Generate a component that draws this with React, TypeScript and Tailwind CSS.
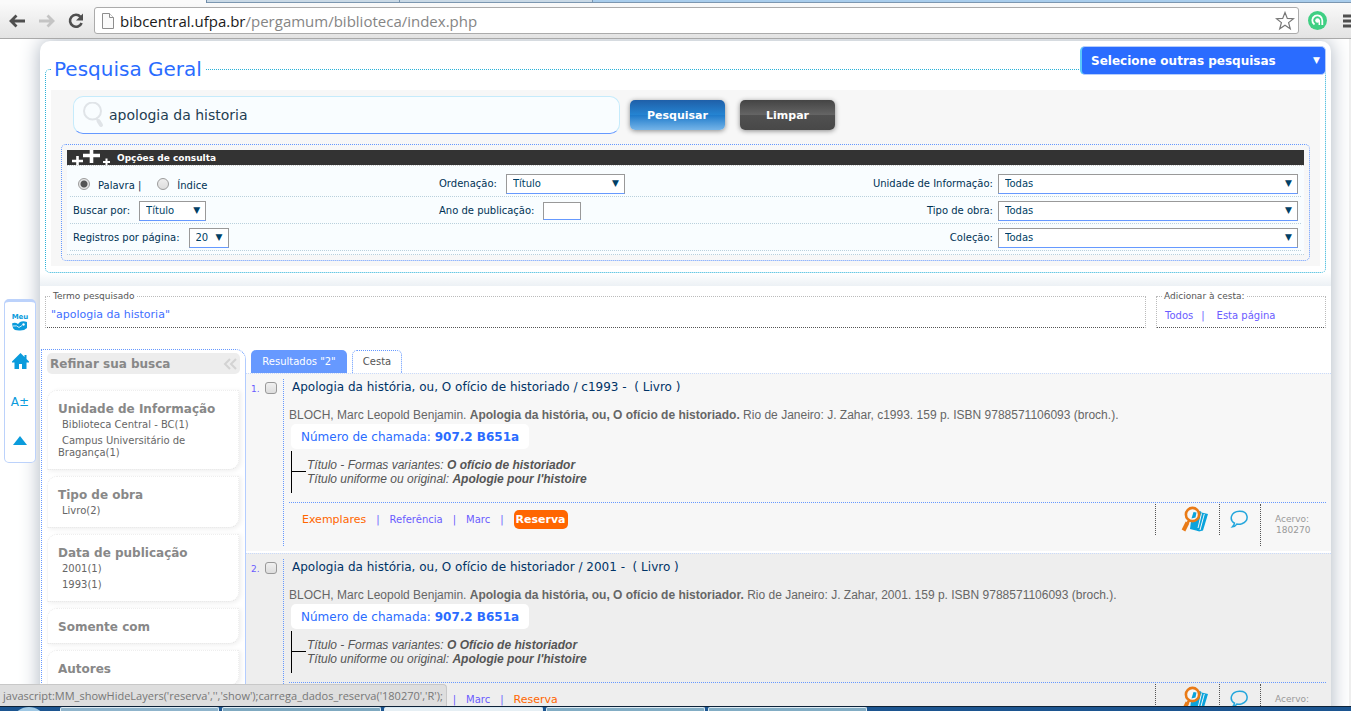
import type { ReactNode } from "react";
import clsx from "clsx";

const sans = "font-['DejaVu_Sans',Verdana,sans-serif]";
const arial = "font-['Liberation_Sans',Arial,sans-serif]";
const chrome = "font-['Open_Sans','Noto_Sans',sans-serif]";

const refinements = [
  { title: "Unidade de Informação", items: ["Biblioteca Central - BC(1)", "Campus Universitário de Bragança(1)"] },
  { title: "Tipo de obra", items: ["Livro(2)"] },
  { title: "Data de publicação", items: ["2001(1)", "1993(1)"] },
  { title: "Somente com", items: [] },
  { title: "Autores", items: [] },
];

const results = [
  {
    id: 1,
    title: "Apologia da história, ou, O ofício de historiado / c1993 -\u00a0 ( Livro )",
    work: "Apologia da história, ou, O ofício de historiado.",
    imprint: "Rio de Janeiro: J. Zahar, c1993. 159 p. ISBN 9788571106093 (broch.).",
    variant: "O ofício de historiador",
    reserved: true,
  },
  {
    id: 2,
    title: "Apologia da história, ou, O ofício de historiador / 2001 -\u00a0 ( Livro )",
    work: "Apologia da história, ou, O ofício de historiador.",
    imprint: "Rio de Janeiro: J. Zahar, 2001. 159 p. ISBN 9788571106093 (broch.).",
    variant: "O Ofício de historiador",
    reserved: false,
  },
];

function BrowserBar() {
  return (
    <header className={clsx("shrink-0", chrome)}>
      <div className="flex h-[3px] bg-[#a9cdec]">
        <div className="w-[207px] border-r border-[#6f8ba8] bg-[#fafafa]" />
        <div className="w-[193px] border-r border-b border-[#7b96b0] bg-[#c9d9e6]" />
        <div className="w-[193px] border-r border-b border-[#7b96b0] bg-[#c9d9e6]" />
        <div className="flex-1 border-b border-[#7b96b0]" />
      </div>
      <div className="flex h-9 items-center overflow-hidden border-b border-[#a9a9a9] bg-linear-to-b from-[#fafafa] to-[#e3e3e3] pl-2">
        <button aria-label="Voltar" className="w-[30px]">
          <svg width="18" height="16" viewBox="0 0 18 16" fill="none" stroke="#4f4f4f" strokeWidth="2.8">
            <path d="M17 8H3.500M8.500 2.500L3 8l5.500 5.500" />
          </svg>
        </button>
        <button aria-label="Avançar" className="w-[29px]">
          <svg width="18" height="16" viewBox="0 0 18 16" fill="none" stroke="#c4c4c4" strokeWidth="2.8">
            <path d="M1 8h13.500M9.500 2.500L15 8l-5.500 5.500" />
          </svg>
        </button>
        <button aria-label="Recarregar" className="w-[27px]">
          <svg width="18" height="16" viewBox="0 0 18 16">
            <path d="M13.500 3.800A6 6 0 1 0 14.600 10" fill="none" stroke="#4f4f4f" strokeWidth="2.600" />
            <path d="M16 .5v7H9z" fill="#4f4f4f" />
          </svg>
        </button>
        <div className="flex h-[27px] flex-1 items-center rounded-[3px] border border-[#ababab] bg-white px-[7px]">
          <svg width="12" height="16" viewBox="0 0 12 16" fill="#fafafa" stroke="#8d8d8d">
            <path d="M.5 .5h7l4 4v11H.5z" />
            <path d="M7.500 .5v4h4" />
          </svg>
          <p className="flex-1 pl-[6px] text-[15px] leading-5 text-[#858585]">
            <span className="text-[#1a1a1a]">bibcentral.ufpa.br</span>/pergamum/biblioteca/index.php
          </p>
          <button aria-label="Favoritos" className="-mr-1">
            <svg width="20" height="20" viewBox="0 0 20 20" fill="#fff" stroke="#777" strokeWidth="1.200">
              <path d="M10 1.500l2.300 5.900 6.200.3-4.900 3.900 1.700 6.200-5.300-3.500-5.300 3.500 1.700-6.200L1.500 7.700l6.200-.3z" />
            </svg>
          </button>
        </div>
        <button aria-label="Extensão" className="ml-[9px]">
          <svg width="19" height="19" viewBox="0 0 19 19">
            <circle cx="9.500" cy="9.500" r="9.500" fill="#3fcf83" />
            <path d="M6.500 13.500A5 5 0 1 1 14.300 9.500v4.500" fill="none" stroke="#fff" strokeWidth="1.800" />
            <path d="M11.300 9v5" stroke="#fff" strokeWidth="1.500" />
            <circle cx="9.500" cy="9.500" r="2.300" fill="#fff" />
          </svg>
        </button>
        <button aria-label="Menu" className="-mr-2 ml-4">
          <svg width="16" height="14" viewBox="0 0 16 14" stroke="#4f4f4f" strokeWidth="3">
            <path d="M0 2h16M0 7h16M0 12h16" />
          </svg>
        </button>
      </div>
    </header>
  );
}

function Select({ id, value, className }: { id: string; value: string; className: string }) {
  return (
    <span className={clsx("relative inline-block h-5", className)}>
      <select
        id={id}
        className="block h-5 w-full appearance-none border border-[#999] border-b-[#6699ff] bg-white pl-[6px] text-[10px] leading-4 text-[#003f66]"
      >
        <option>{value}</option>
      </select>
      <span className="pointer-events-none absolute top-[3px] right-[6px] text-[9px] leading-3 text-[#003f66]">▼</span>
    </span>
  );
}

function Radio({ id, label, checked }: { id: string; label: string; checked?: boolean }) {
  return (
    <>
      <input
        type="radio"
        name="modo"
        id={id}
        defaultChecked={checked}
        className="size-3 appearance-none rounded-full border border-[#9b9b9b] bg-linear-to-b from-[#eee] to-[#ddd] checked:bg-[radial-gradient(circle,#555_0_3px,#e6e6e6_4px)]"
      />
      <label htmlFor={id} className="pt-[5px]">
        {label}
      </label>
    </>
  );
}

function OptionRow({ children }: { children: ReactNode }) {
  return (
    <div className="grid h-[27px] grid-cols-[366px_1fr_auto] items-center border-b border-dotted border-[#b9d0dc] px-[3px] pt-px">
      {children}
    </div>
  );
}

function SearchOptions() {
  return (
    <section className="rounded-[5px] border border-dotted border-[#6699ff] p-[5px]">
      <h2 className="flex h-[15px] items-center bg-[#333] pl-1 text-[9px] leading-3 font-bold text-white">
        <svg width="40" height="15" viewBox="0 0 40 15" stroke="#fff" fill="none">
          <path d="M1 11h11M6.500 6v9" strokeWidth="2.600" />
          <path d="M12 5.500h17M20.500 0v13" strokeWidth="3.600" />
          <path d="M32 12h7M35.500 8.500v7" strokeWidth="2" />
        </svg>
        <span className="pl-[6px]">Opções de consulta</span>
      </h2>
      <div className="border-t border-b border-dotted border-t-[#ccc] border-b-[#b9d0dc] bg-[#f9fdff] px-[3px] pt-1 pb-[3px] text-[10px] leading-3 text-[#003355]">
        <OptionRow>
          <div className="flex items-center gap-2 pl-[5px]">
            <Radio id="palavra" label="Palavra |" checked />
            <span className="w-0" />
            <Radio id="indice" label="Índice" />
          </div>
          <div className="flex items-center gap-[9px]">
            <label htmlFor="ordenacao">Ordenação:</label>
            <Select id="ordenacao" value="Título" className="w-[119px]" />
          </div>
          <div className="flex items-center gap-[5px]">
            <label htmlFor="unidade">Unidade de Informação:</label>
            <Select id="unidade" value="Todas" className="w-[300px]" />
          </div>
        </OptionRow>
        <OptionRow>
          <div className="flex items-center gap-[9px]">
            <label htmlFor="buscar">Buscar por:</label>
            <Select id="buscar" value="Título" className="w-[67px]" />
          </div>
          <div className="flex items-center gap-[9px]">
            <label htmlFor="ano">Ano de publicação:</label>
            <input id="ano" className="h-[18px] w-[38px] border border-[#999] border-b-[#6699ff] bg-white" />
          </div>
          <div className="flex items-center justify-end gap-[5px]">
            <label htmlFor="tipo">Tipo de obra:</label>
            <Select id="tipo" value="Todas" className="w-[300px]" />
          </div>
        </OptionRow>
        <OptionRow>
          <div className="flex items-center gap-[9px]">
            <label htmlFor="registros">Registros por página:</label>
            <Select id="registros" value="20" className="w-10" />
          </div>
          <div />
          <div className="flex items-center justify-end gap-[5px]">
            <label htmlFor="colecao">Coleção:</label>
            <Select id="colecao" value="Todas" className="w-[300px]" />
          </div>
        </OptionRow>
      </div>
    </section>
  );
}

function SearchForm() {
  return (
    <div className="relative px-[5px] pt-[17px]">
      <fieldset className="rounded-[5px] border border-dotted border-[#28b1d8] px-[5px] pt-[10px] pb-[6px]">
        <legend className="px-[3px] text-[20px] leading-[22px] text-[#2a6cff]">Pesquisa Geral</legend>
        <form className="bg-[#f7f7f7] px-[10px] pt-[6px] pb-[5px]" onSubmit={(e) => e.preventDefault()}>
          <div className="mb-[10px] flex items-center pl-3">
            <label className="flex h-[38px] w-[547px] items-center rounded-[10px] border border-[#c6ebfb] border-b-[#6699ff] bg-[#f9fdff] pl-[9px]">
              <svg width="22" height="27" viewBox="0 0 22 27" fill="none" stroke="#e0e4e8">
                <circle cx="9.500" cy="9" r="8.500" strokeWidth="2" />
                <path d="M13 16l2 2.500" strokeWidth="2" />
                <path d="M15.500 19l2.500 4" strokeWidth="4" strokeLinecap="round" />
              </svg>
              <input
                aria-label="Termo de busca"
                defaultValue="apologia da historia"
                className="ml-1 flex-1 bg-transparent text-[14px] leading-5 text-[#1f3d52] outline-none"
              />
            </label>
            <button
              type="submit"
              className="ml-[10px] h-[30px] w-[95px] rounded-[5px] bg-[linear-gradient(#1f5fa8,#2585d3_50%,#1f7bcb_51%,#75b4e8)] pt-[2px] text-[11px] font-bold text-white shadow-[0_1px_5px_#888]"
            >
              Pesquisar
            </button>
            <button
              type="reset"
              className="ml-[15px] h-[30px] w-[95px] rounded-[5px] bg-[linear-gradient(#444,#656565_50%,#505050_51%,#484848)] pt-[2px] text-[11px] font-bold text-white shadow-[0_1px_5px_#888]"
            >
              Limpar
            </button>
          </div>
          <SearchOptions />
        </form>
      </fieldset>
      <div className="absolute top-[5px] right-[5px] w-[246px]">
        <select
          aria-label="Outras pesquisas"
          className="block h-[29px] w-full appearance-none rounded-[5px] border border-l-2 border-[#b5cdfb] border-l-[#5ac8fa] bg-[#2a6cff] pl-[9px] text-[12px] font-bold text-white"
        >
          <option>Selecione outras pesquisas</option>
        </select>
        <span className="pointer-events-none absolute top-2 right-[6px] text-[9px] leading-3 text-white">▼</span>
      </div>
    </div>
  );
}

function TermBar() {
  const box = "h-[38px] border border-dotted border-[#bbb] border-b-[#555]";
  return (
    <div className="flex gap-[10px] px-[5px] pt-1">
      <fieldset className={clsx(box, "flex-1 px-[5px]")}>
        <legend className="px-[2px] text-[9px] leading-3 text-[#555]">Termo pesquisado</legend>
        <p className="pt-[5px] text-[11px] leading-4 text-[#3f6fff]">"apologia da historia"</p>
      </fieldset>
      <fieldset className={clsx(box, "w-[170px] px-[5px]")}>
        <legend className="px-[2px] text-[9px] leading-3 text-[#555]">Adicionar à cesta:</legend>
        <p className="flex gap-2 pt-[6px] pl-[3px] text-[10px] leading-4 text-[#6a5cff]">
          <a href="#todos">Todos</a>
          <span>|</span>
          <a href="#pagina" className="pl-1">
            Esta página
          </a>
        </p>
      </fieldset>
    </div>
  );
}

function Sidebar() {
  return (
    <aside className="ml-px w-[205px] shrink-0 rounded-tr-[10px] border border-b-0 border-dotted border-[#6699ff] px-[5px] pt-[3px]">
      <h2 className="mb-4 flex h-[21px] items-center justify-between rounded-[5px] bg-[#ededed] px-[3px] text-[12px] leading-4 font-bold text-[#888]">
        Refinar sua busca
        <svg width="14" height="12" viewBox="0 0 14 12" fill="none" stroke="#d3d3d3" strokeWidth="2">
          <path d="M7 1L2 6l5 5M13 1L8 6l5 5" />
        </svg>
      </h2>
      <div className="flex flex-col gap-[6px] pr-px">
        {refinements.map((group) => (
          <section
            key={group.title}
            className="rounded-tl-[10px] rounded-br-[10px] border border-dotted border-[#eee] border-b-[#ddd] bg-white px-[10px] pt-[10px] pb-2 shadow-[2px_1px_5px_#eee]"
          >
            <h3 className="text-[12px] leading-4 font-bold text-[#888]">{group.title}</h3>
            {group.items.length > 0 && (
              <ul className="flex flex-col gap-1 pt-[2px] pb-[2px] text-[10px] leading-3 text-[#666]">
                {group.items.map((item) => (
                  <li key={item} className="indent-1">
                    <a href="#refinar">{item}</a>
                  </li>
                ))}
              </ul>
            )}
          </section>
        ))}
      </div>
    </aside>
  );
}

function LookupIcon() {
  return (
    <svg width="28" height="27" viewBox="0 0 28 27">
      <path d="M10 15l4-8 5-2 1.500 1L17 25 9 23z" fill="#0aa3dc" />
      <path d="M16 24.500L20.500 6.500l6.500 1.500-5 16.500-4 1z" fill="#0aa3dc" />
      <path d="M20.500 7.500L17 22M23.300 8L19 24" stroke="#f7f7f7" strokeWidth="1" />
      <circle cx="11.500" cy="8.500" r="6.600" fill="#f7f7f7" stroke="#e97b17" strokeWidth="2.600" />
      <path d="M10.500 12.500l2-6.500 3 .5-1 5z" fill="#0aa3dc" />
      <path d="M8.500 14L6.500 17" stroke="#e97b17" strokeWidth="2.500" />
      <path d="M6.500 16.500l-4 8" stroke="#e97b17" strokeWidth="4" />
    </svg>
  );
}

function BubbleIcon() {
  return (
    <svg width="18" height="19" viewBox="0 0 18 19" fill="none" stroke="#23a6dc" strokeWidth="1.500">
      <path d="M4.500 13.200C-1 10 .5 1.500 9.500 1.200c9-.2 10.300 9.500 2.300 12.600-2 .7-3.800.6-5 .3-1 1.500-2.600 2.500-4.300 2.700 1-1 1.800-2 2-3.600z" />
    </svg>
  );
}

function Result({ item, alternate }: { item: (typeof results)[number]; alternate: boolean }) {
  return (
    <article
      className={clsx(
        "mb-[2px] flex h-[178px] border-t border-dotted border-[#c9dafa] pt-[5px] pr-[5px] pb-[5px]",
        alternate ? "bg-[#eee]" : "bg-[#f7f7f7]"
      )}
    >
      <div className="flex w-[38px] shrink-0 items-start border-r border-dotted border-[#6699ff] pt-[3px] pl-[5px]">
        <label htmlFor={`item-${item.id}`} className="w-[14px] pt-px text-[9px] leading-3 text-[#6a5cff]">
          {item.id}.
        </label>
        <input
          id={`item-${item.id}`}
          type="checkbox"
          className="size-3 shrink-0 appearance-none rounded-[3px] border border-[#999] bg-linear-to-b from-[#f0f0f0] to-[#ddd]"
        />
      </div>
      <div className="flex min-w-0 flex-1 flex-col pl-[5px]">
        <h3 className="pl-[3px] text-[12px] leading-4 text-[#003366]">
          <a href="#obra">{item.title}</a>
        </h3>
        <p className={clsx("pt-3 text-[12px] leading-4 text-[#666]", arial)}>
          BLOCH, Marc Leopold Benjamin. <b>{item.work}</b> {item.imprint}
        </p>
        <p className="mt-px ml-[2px] self-start rounded-[5px] bg-white px-[10px] pt-px text-[12px] leading-6 text-[#2a6cff]">
          Número de chamada: <b>907.2 B651a</b>
        </p>
        <div className="mt-[2px] ml-[2px] flex h-[42px] border-l border-black">
          <span className="h-[21px] w-[14px] border-b border-black" />
          <p className={clsx("pt-[7px] pl-px text-[12px] leading-[14px] text-[#555] italic", arial)}>
            Título - Formas variantes: <b>{item.variant}</b>
            <br />
            Título uniforme ou original: <b>Apologie pour l'histoire</b>
          </p>
        </div>
        <footer className="mt-[9px] flex items-start border-t border-dotted border-[#6699ff] pt-px">
          <nav className="flex flex-1 items-center gap-[10px] pt-[6px] pl-[13px] text-[10px] leading-[19px] text-[#6a5cff]">
            <a href="#exemplares" className="text-[11px] text-[#ff6600]">
              Exemplares
            </a>
            <span>|</span>
            <a href="#referencia">Referência</a>
            <span>|</span>
            <a href="#marc">Marc</a>
            <span>|</span>
            <a
              href="#reserva"
              className={clsx(
                "text-[11px]",
                item.reserved ? "rounded-[5px] bg-[#ff6600] px-[2px] font-bold text-white" : "text-[#ff6600]"
              )}
            >
              Reserva
            </a>
          </nav>
          <button aria-label="Localizar" className="h-[31px] w-16 border-l border-dotted border-[#555] pl-[25px]">
            <LookupIcon />
          </button>
          <button aria-label="Comentar" className="h-[31px] w-[41px] border-l border-dotted border-[#555] pl-[10px]">
            <BubbleIcon />
          </button>
          <p className="h-[42px] w-[66px] border-l border-dotted border-[#555] pt-[10px] pl-[14px] text-[9px] leading-[11px] text-[#999]">
            Acervo:
            <br />
            <span className="pl-px">180270</span>
          </p>
        </footer>
      </div>
    </article>
  );
}

function SideTools() {
  return (
    <nav className="absolute top-[260px] left-1 flex h-[164px] w-8 flex-col items-center rounded-[5px] border border-t-[3px] border-[#bcd2fb] bg-white pt-3">
      <a href="#meu" aria-label="Meu Pergamum" className="flex h-[39px] flex-col items-center text-[7px] leading-[7px] font-bold text-[#0a9bdc]">
        Meu
        <svg width="16" height="10" viewBox="0 0 16 10" fill="#0a9bdc">
          <path d="M0 2.500q3-1.500 6 .5l2-2q3-1.500 7 0v6q-3 3-8 2.500Q2 9.500 1 7z" />
          <path d="M1 5q4-1 6 1.500l3-2" fill="none" stroke="#fff" strokeWidth=".8" />
          <circle cx="11.500" cy="3.500" r="1.200" fill="#fff" />
        </svg>
      </a>
      <a href="#inicio" aria-label="Início" className="h-[39px]">
        <svg width="17" height="17" viewBox="0 0 17 17" fill="#0a9bdc">
          <path d="M8.500 0l4 4V2h2v4L17 8.500V9.500h-2.500V16H10v-5H7v5H2.500V9.500H0v-1z" />
        </svg>
      </a>
      <a href="#fonte" className="h-10 text-[12px] leading-5 text-[#0a9bdc]">
        A±
      </a>
      <a href="#topo" aria-label="Topo" className="pt-1">
        <svg width="14" height="10" viewBox="0 0 14 10" fill="#0a9bdc">
          <path d="M7 0l7 9H0z" />
        </svg>
      </a>
    </nav>
  );
}

function Taskbar() {
  const windows = ["#8fb4cb", "#7fa9c0", "#e6eff4", "#82adc4", "#82adc4"];
  return (
    <footer className="flex h-[5px] shrink-0 gap-[3px] border-t border-[#0d2238] bg-[#1c5590]">
      <div className="flex w-[57px] justify-center overflow-hidden">
        <div className="h-5 w-7 rounded-[50%] bg-[#9fc8e4]" />
      </div>
      {windows.map((color, i) => (
        <div key={i} className="w-[159px] rounded-t-[2px] border border-b-0 border-[#dbeaf3]" style={{ background: color }} />
      ))}
    </footer>
  );
}

export default function App() {
  return (
    <div className={clsx("flex h-screen flex-col overflow-hidden bg-white", sans)}>
      <BrowserBar />
      <div className="relative min-h-0 flex-1 overflow-hidden border-r-2 border-[#eee]">
        <main className="mt-[2px] mr-[18px] ml-10 rounded-t-[10px] bg-white shadow-[0_0_20px_#aab3bf]">
          <SearchForm />
          <div className="h-[13px] bg-linear-to-b from-white to-[#ecf1f5]" />
          <TermBar />
          <div className="flex pt-[21px]">
            <Sidebar />
            <section className="min-w-0 flex-1">
              <div className="flex h-6 items-end gap-[5px] pl-[5px] text-[10px] leading-[22px]">
                <button className="h-[23px] w-24 rounded-t-[5px] bg-[#6699ff] pt-px text-white">Resultados "2"</button>
                <button className="h-[23px] w-[50px] rounded-t-[5px] border border-b-0 border-dotted border-[#6699ff] text-[#555]">
                  Cesta
                </button>
              </div>
              {results.map((item, i) => (
                <Result key={item.id} item={item} alternate={i % 2 === 1} />
              ))}
            </section>
          </div>
        </main>
        <SideTools />
        <div
          className={clsx(
            "absolute bottom-0 left-0 h-[22px] rounded-tr-[4px] border border-b-0 border-l-0 border-[#c8c8c8] bg-[#dedede] px-[3px] text-[11px] leading-[22px] text-[#777]",
            chrome
          )}
        >
          javascript:MM_showHideLayers('reserva','','show');carrega_dados_reserva('180270','R');
        </div>
      </div>
      <Taskbar />
    </div>
  );
}
